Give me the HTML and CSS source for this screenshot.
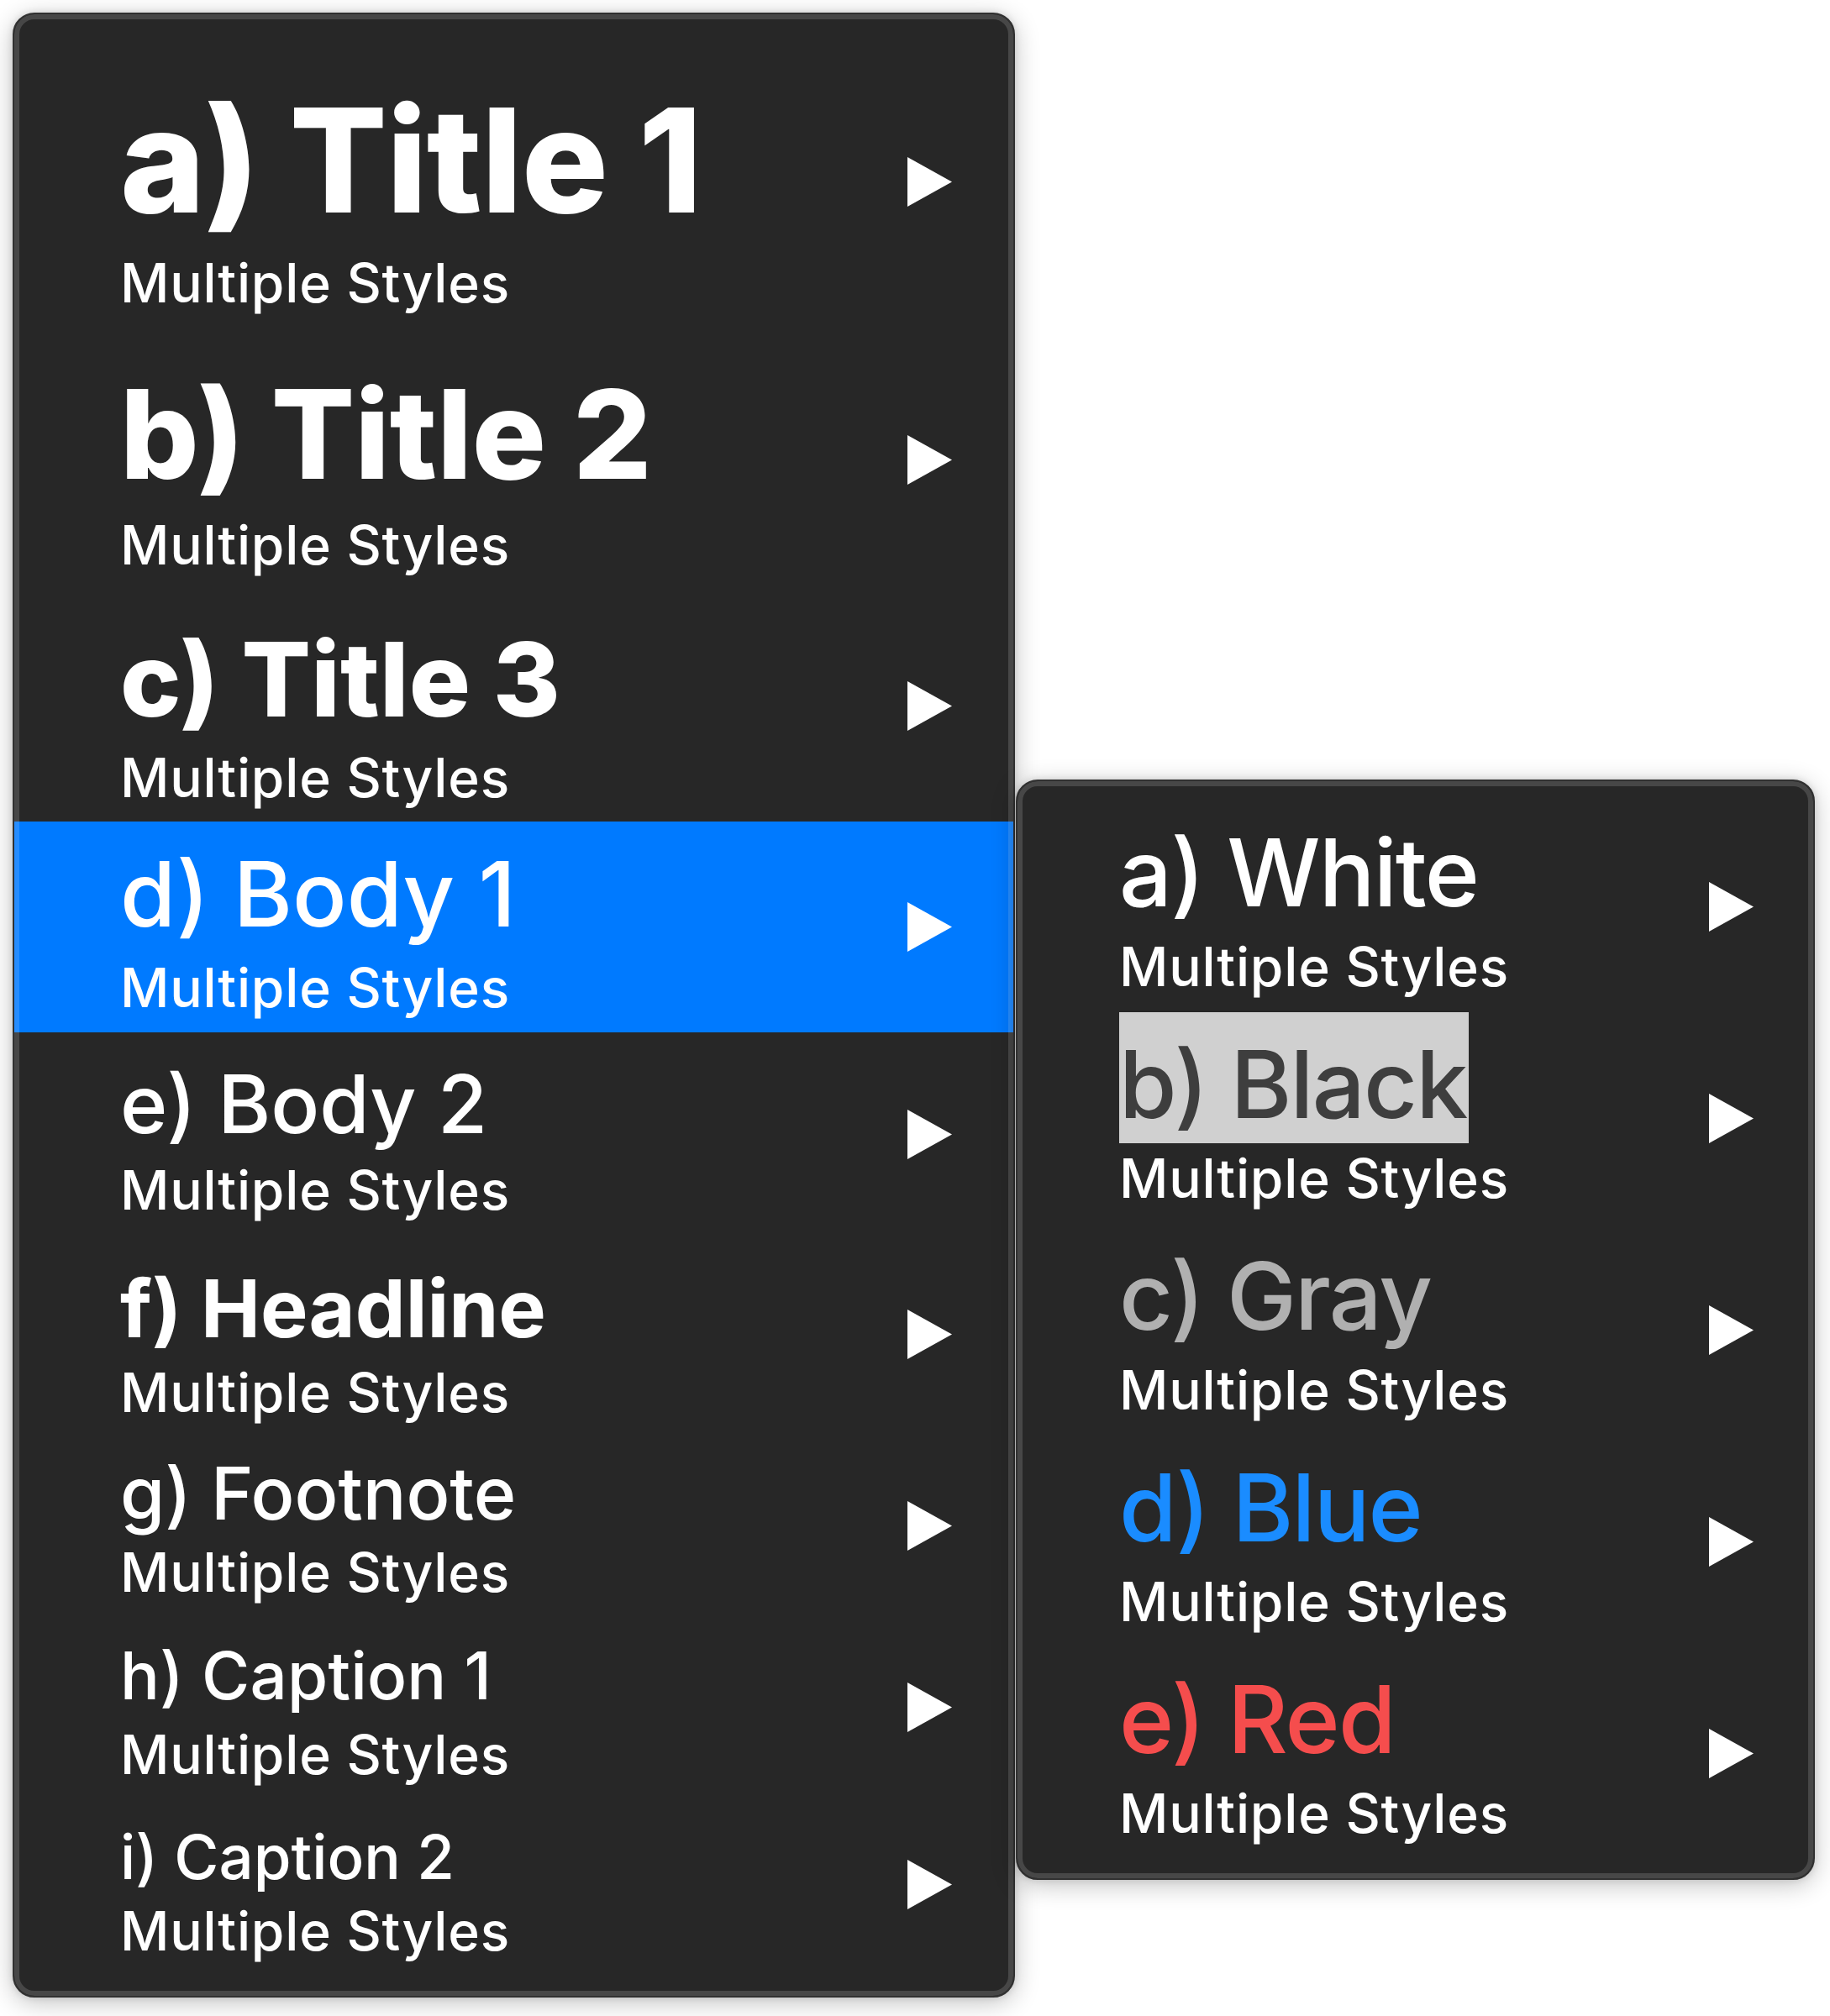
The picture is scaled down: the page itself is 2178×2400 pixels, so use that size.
FILE: index.html
```html
<!DOCTYPE html>
<html lang="en">
<head>
<meta charset="utf-8">
<title>Text styles menu</title>
<link rel="stylesheet" href="styles.css">
</head>
<body>
<div class="stage">
  <div class="menu main-menu">
    <div class="row r-a">
      <div class="label"><div class="title">a) Title 1</div><div class="sub">Multiple Styles</div></div>
      <svg class="arrow" viewBox="0 0 53 59"><polygon points="0,0 53,29.5 0,59"/></svg>
    </div>
    <div class="row r-b">
      <div class="label"><div class="title">b) Title 2</div><div class="sub">Multiple Styles</div></div>
      <svg class="arrow" viewBox="0 0 53 59"><polygon points="0,0 53,29.5 0,59"/></svg>
    </div>
    <div class="row r-c">
      <div class="label"><div class="title">c) Title 3</div><div class="sub">Multiple Styles</div></div>
      <svg class="arrow" viewBox="0 0 53 59"><polygon points="0,0 53,29.5 0,59"/></svg>
    </div>
    <div class="row r-d is-active">
      <div class="label"><div class="title">d) Body 1</div><div class="sub">Multiple Styles</div></div>
      <svg class="arrow" viewBox="0 0 53 59"><polygon points="0,0 53,29.5 0,59"/></svg>
    </div>
    <div class="row r-e">
      <div class="label"><div class="title">e) Body 2</div><div class="sub">Multiple Styles</div></div>
      <svg class="arrow" viewBox="0 0 53 59"><polygon points="0,0 53,29.5 0,59"/></svg>
    </div>
    <div class="row r-f">
      <div class="label"><div class="title">f) Headline</div><div class="sub">Multiple Styles</div></div>
      <svg class="arrow" viewBox="0 0 53 59"><polygon points="0,0 53,29.5 0,59"/></svg>
    </div>
    <div class="row r-g">
      <div class="label"><div class="title">g) Footnote</div><div class="sub">Multiple Styles</div></div>
      <svg class="arrow" viewBox="0 0 53 59"><polygon points="0,0 53,29.5 0,59"/></svg>
    </div>
    <div class="row r-h">
      <div class="label"><div class="title">h) Caption 1</div><div class="sub">Multiple Styles</div></div>
      <svg class="arrow" viewBox="0 0 53 59"><polygon points="0,0 53,29.5 0,59"/></svg>
    </div>
    <div class="row r-i">
      <div class="label"><div class="title">i) Caption 2</div><div class="sub">Multiple Styles</div></div>
      <svg class="arrow" viewBox="0 0 53 59"><polygon points="0,0 53,29.5 0,59"/></svg>
    </div>
  </div>

  <div class="menu sub-menu">
    <div class="srow">
      <div class="label"><div class="stitle"><span class="chip c-white">a) White</span></div><div class="sub">Multiple Styles</div></div>
      <svg class="arrow" viewBox="0 0 53 59"><polygon points="0,0 53,29.5 0,59"/></svg>
    </div>
    <div class="srow">
      <div class="label"><div class="stitle"><span class="chip c-black">b) Black</span></div><div class="sub">Multiple Styles</div></div>
      <svg class="arrow" viewBox="0 0 53 59"><polygon points="0,0 53,29.5 0,59"/></svg>
    </div>
    <div class="srow">
      <div class="label"><div class="stitle"><span class="chip c-gray">c) Gray</span></div><div class="sub">Multiple Styles</div></div>
      <svg class="arrow" viewBox="0 0 53 59"><polygon points="0,0 53,29.5 0,59"/></svg>
    </div>
    <div class="srow">
      <div class="label"><div class="stitle"><span class="chip c-blue">d) Blue</span></div><div class="sub">Multiple Styles</div></div>
      <svg class="arrow" viewBox="0 0 53 59"><polygon points="0,0 53,29.5 0,59"/></svg>
    </div>
    <div class="srow">
      <div class="label"><div class="stitle"><span class="chip c-red">e) Red</span></div><div class="sub">Multiple Styles</div></div>
      <svg class="arrow" viewBox="0 0 53 59"><polygon points="0,0 53,29.5 0,59"/></svg>
    </div>
  </div>
</div>
</body>
</html>
```
FILE: styles.css
```css
* { box-sizing: border-box; }

html, body {
  margin: 0;
  padding: 0;
  background: #ffffff;
}

body {
  width: 2178px;
  height: 2400px;
  overflow: hidden;
  font-family: Inter, "Noto Sans", "Liberation Sans", sans-serif;
  color: #ffffff;
}

.stage {
  display: flex;
  align-items: flex-start;
  padding: 15px 0 0 15px;
}

.menu {
  position: relative;
  background: #272727;
  border: 2px solid #313131;
  border-radius: 26px;
  box-shadow: 0 6px 30px rgba(0, 0, 0, 0.24), 0 0 8px rgba(0, 0, 0, 0.12);
  overflow: hidden;
}

.menu::after {
  content: "";
  position: absolute;
  inset: 0;
  border: 6px solid rgba(255, 255, 255, 0.15);
  border-radius: 24px;
  pointer-events: none;
}

.main-menu {
  width: 1193px;
  padding: 25px 0;
}

.sub-menu {
  width: 951px;
  margin-top: 913px;
  margin-left: 1px;
  padding: 23px 0;
}

.row,
.srow {
  display: flex;
  align-items: center;
  justify-content: space-between;
}

.row {
  padding: 0 73px 0 126px;
}

.srow {
  padding: 0 71px 0 121px;
}

.label {
  display: flex;
  flex-direction: column;
  align-items: flex-start;
}

.title {
  line-height: 1;
  white-space: nowrap;
}

.sub {
  font-size: 64px;
  line-height: 64px;
  font-weight: 500;
  letter-spacing: 0.8px;
  white-space: nowrap;
}

.arrow {
  width: 53px;
  height: 59px;
  flex: none;
  fill: #ffffff;
}

.is-active {
  background: #007aff;
}

/* Main menu rows: title size, space above title, gap to subtitle, space below */
.r-a .title { font-size: 172px; font-weight: 800; padding-top: 61.5px; letter-spacing: -1px; }
.r-a .sub { margin-top: 29.25px; margin-bottom: 21.25px; }

.r-b .title { font-size: 147px; font-weight: 800; padding-top: 53px; letter-spacing: -0.1px; }
.r-b .sub { margin-top: 26.5px; margin-bottom: 23.5px; }

.r-c .title { font-size: 122px; font-weight: 800; padding-top: 43.7px; letter-spacing: 0.1px; }
.r-c .sub { margin-top: 24px; margin-bottom: 20.3px; }

.r-d .title { font-size: 107px; font-weight: 500; padding-top: 33.5px; }
.r-d .sub { margin-top: 26px; margin-bottom: 20.5px; }

.r-e .title { font-size: 96px; font-weight: 500; padding-top: 37px; }
.r-e .sub { margin-top: 22.7px; margin-bottom: 24.3px; }

.r-f .title { font-size: 95px; font-weight: 700; padding-top: 37px; }
.r-f .sub { margin-top: 20.7px; margin-bottom: 15.3px; }

.r-g .title { font-size: 86px; font-weight: 500; padding-top: 29.8px; }
.r-g .sub { margin-top: 19px; margin-bottom: 25.2px; }

.r-h .title { font-size: 78px; font-weight: 500; padding-top: 26.7px; letter-spacing: 0.2px; }
.r-h .sub { margin-top: 23px; margin-bottom: 16.3px; }

.r-i .title { font-size: 72.5px; font-weight: 500; padding-top: 38.5px; }
.r-i .sub { margin-top: 18.8px; margin-bottom: 20.2px; }

/* Submenu rows */
.stitle {
  line-height: 0;
}

.chip {
  display: inline-block;
  font-size: 111px;
  font-weight: 500;
  letter-spacing: -1.8px;
  line-height: 111px;
  padding: 29.5px 0 15.5px;
  white-space: nowrap;
}

.srow .sub {
  padding: 9.75px 0 22.25px;
  line-height: 64px;
  box-sizing: content-box;
}

.c-white { color: #ffffff; }
.c-black { color: #3e3e3e; background: #d0d0d0; padding-right: 3px; }
.c-gray { color: #b0b0b0; }
.c-blue { color: #1a8cff; }
.c-red { color: #f54d4d; }
```
